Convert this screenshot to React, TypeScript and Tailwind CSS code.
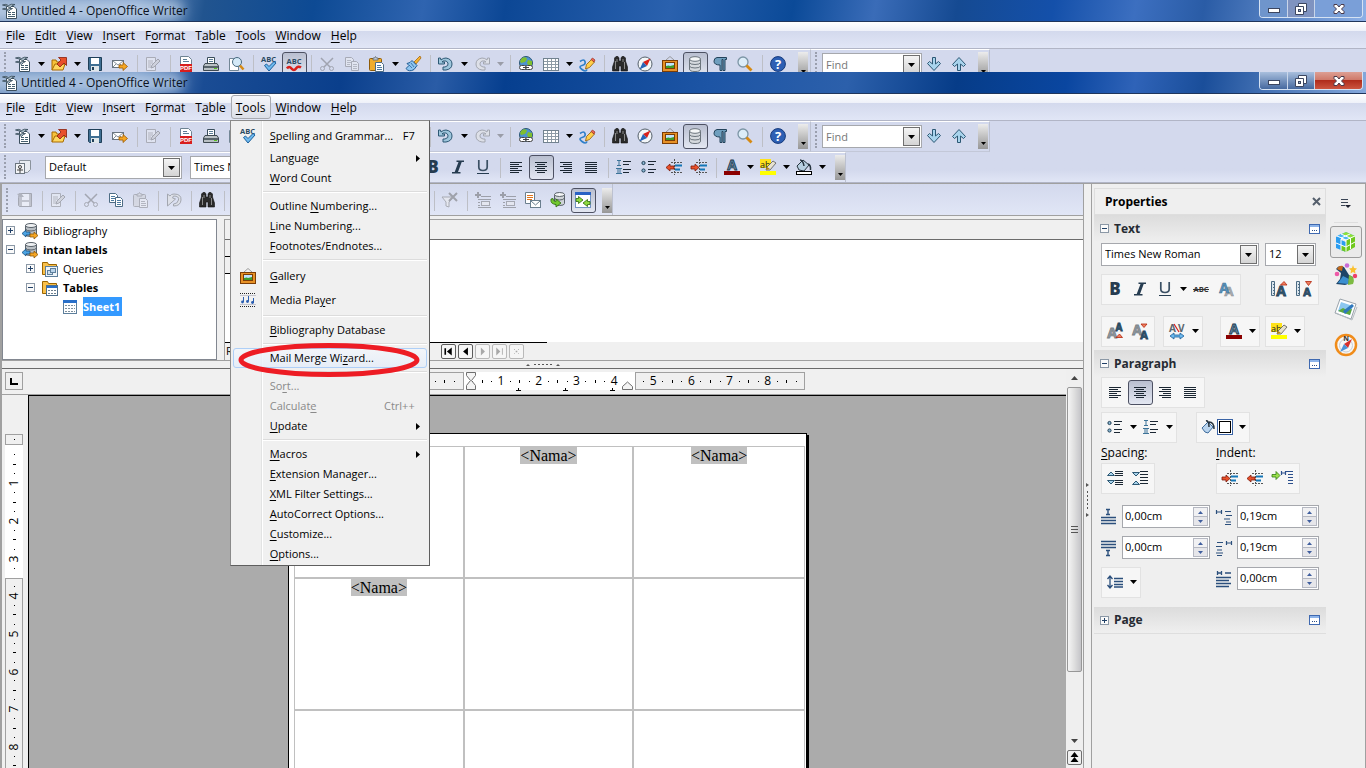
import { useState, type ReactNode } from 'react';
import clsx from 'clsx';

const NAVY = '#2b4a63';

const alignLines = (rows: number[][]) =>
  rows.map(([x, w], i) => <rect key={i} x={x} y={3 + i * 2} width={w} height="1" fill="#1b2733" />);

const icons: Record<string, ReactNode> = {
  doc: (
    <>
      <path d="M4.500 3.500H12l2.500 2.500v9.500h-10z" fill="#fff" stroke="#3b4f5e" />
      <path d="M6 9.500h3M6 11.500h3M6 13.500h7M10 9.500h3M10 11.500h3" stroke="#46606f" />
      <path d="M.5 2Q4 .5 6.500 2.500 9 .5 13 1.500 10 2 8 5 5 2.500.5 2z" fill="#a9bcc8" stroke="#3b4f5e" strokeWidth=".9" />
      <path d="M.5 6Q3 4.500 5 6.500 7.500 5 10.500 5.500 8 6.500 6.500 8.500 4 6 .5 6z" fill="#a9bcc8" stroke="#3b4f5e" strokeWidth=".9" />
    </>
  ),
  open: (
    <>
      <path d="M1 14V4h4l1 2h5v2" fill="#f6c33b" stroke="#a86b00" />
      <path d="M1 14l3-6h10l-2 6z" fill="#ffd75e" stroke="#a86b00" />
      <path d="M6 8l4-4-2.500-2.500h8v8L13 7l-4 4z" fill="#e8502a" stroke="#8a1f0b" strokeWidth=".8" />
    </>
  ),
  save: (
    <>
      <path d="M1.500 1.500h13v13h-12l-1-1z" fill="#3f6f92" stroke="#1f3f58" />
      <rect x="4" y="2" width="8" height="6" fill="#fff" />
      <rect x="4" y="10" width="8" height="5" fill="#dfe6ea" />
      <rect x="5" y="11" width="2" height="3" fill="#1f3f58" />
    </>
  ),
  mail: (
    <>
      <rect x=".5" y="4.500" width="11" height="7" fill="#fff" stroke="#6a7580" />
      <path d="M1 5l5 4 5-4M1 11l3-3M11 11L8 8" fill="none" stroke="#6a7580" strokeWidth=".8" />
      <path d="M7 9h4V6.500l4.500 4-4.500 4V12H7z" fill="#f5a623" stroke="#9c5a00" strokeWidth=".8" />
    </>
  ),
  edit: (
    <g opacity=".45">
      <path d="M1.500 1.500h9v13h-9z" fill="#eef0f4" stroke="#777" />
      <path d="M3 5h5M3 7h5M3 9h3M3 11h3" stroke="#888" />
      <path d="M6 12l1-3 6-6 2 2-6 6z" fill="#c8c8c8" stroke="#666" />
    </g>
  ),
  pdf: (
    <>
      <path d="M2.500 .500h8l3 3v12h-11z" fill="#fff" stroke="#6d8292" />
      <path d="M5 3.500h4M5 5.500h6" stroke="#5b7d96" />
      <rect x="2" y="8" width="12" height="8" fill="#d81e1e" />
      <text x="8" y="14" fontSize="6" fontWeight="700" fill="#fff" textAnchor="middle" fontFamily="Liberation Sans, sans-serif">PDF</text>
    </>
  ),
  print: (
    <>
      <path d="M4.500 8V1.500h7V8" fill="#fff" stroke="#3a4e5c" />
      <path d="M6 3.500h4M6 5.500h4" stroke="#5b7d96" />
      <path d="M2 7.500h12l1.500 2.500v4.500h-15V10z" fill="#b9c0c4" stroke="#3f4a52" />
      <rect x="1" y="10" width="14" height="2" fill="#59646b" />
      <rect x="11" y="12" width="3" height="1" fill="#58c322" />
    </>
  ),
  preview: (
    <>
      <path d="M1.500 2.500h9v12h-9z" fill="#fff" stroke="#738796" />
      <circle cx="9" cy="6" r="4.500" fill="#d4e9f7" stroke="#47697f" />
      <path d="M12 9.500l3.500 4" stroke="#d68a13" strokeWidth="2.500" />
    </>
  ),
  spell: (
    <>
      <text x="7.500" y="6" fontSize="7.500" fontWeight="700" fill={NAVY} textAnchor="middle" fontFamily="Open Sans, sans-serif">ABC</text>
      <path d="M3.500 9.500l2-1.500 2.500 2.500L13 5.500l2 1.500-7 8z" fill="#6db9ee" stroke="#1d5f9a" />
    </>
  ),
  autospell: (
    <>
      <text x="8" y="8" fontSize="7.500" fontWeight="700" fill={NAVY} textAnchor="middle" fontFamily="Open Sans, sans-serif">ABC</text>
      <path d="M1 12.500q2-3 4.500 0t4.500 0 5-1" fill="none" stroke="#d8201c" strokeWidth="2.600" />
    </>
  ),
  cut: (
    <g opacity=".4" stroke="#555" fill="none">
      <path d="M2 2l9 9M14 2L5 11" strokeWidth="1.500" />
      <circle cx="3.500" cy="12.500" r="2" />
      <circle cx="12.500" cy="12.500" r="2" />
    </g>
  ),
  copy: (
    <>
      <path d="M1.500 1.500h6l2 2v7h-8z" fill="#fff" stroke="#4d6c84" />
      <path d="M3 4.500h4M3 6.500h4M3 8.500h3" stroke="#4d7ba0" />
      <path d="M7.500 5.500h5l2 2v7h-7z" fill="#fff" stroke="#4d6c84" />
      <path d="M9 8.500h4M9 10.500h4M9 12.500h4" stroke="#4d7ba0" />
    </>
  ),
  paste: (
    <>
      <rect x=".500" y="2.500" width="12" height="12" rx="1" fill="#f0ad2c" stroke="#8f5b07" />
      <path d="M4 4V2h1.500l1-1.500 1 1.500H9v2z" fill="#c6ccd0" stroke="#5b666e" strokeWidth=".8" />
      <path d="M6.500 6.500h6l2 2v7h-8z" fill="#fff" stroke="#4d6c84" />
      <path d="M8 9.500h4M8 11.500h5M8 13.500h5" stroke="#4d7ba0" />
    </>
  ),
  brush: (
    <>
      <path d="M15 0l-6 6 2 2 5-6z" fill="#f7b531" stroke="#9c5a00" strokeWidth=".7" />
      <path d="M7 4.500l5 5-3 4q-5 3-8-1l3-3-2-2 3-1z" fill="#8fc6f1" stroke="#1f5c93" />
      <path d="M6 7l3 4M4 9l3 3" stroke="#1f5c93" strokeWidth=".7" />
    </>
  ),
  undo: (
    <path d="M.5 2v6h6V6H4l1-1q4-1 5 2t-3 4H5v3h3q6-1 6-6T8 2Q5 2 3 4L2.500 2z" fill="#9ec6dc" stroke="#2c5874" />
  ),
  redo: (
    <path d="M15.500 2v6h-6V6H12l-1-1q-4-1-5 2t3 4h2v3H8q-6-1-6-6t6-6q3 0 5 2l.5-2z" fill="#dde0e8" stroke="#a3a7b0" />
  ),
  link: (
    <>
      <circle cx="8" cy="7" r="6.500" fill="#4d93cf" stroke="#2b5674" />
      <path d="M4 2q4-2 5 1L7 6 3 7 2 5zM10 4l4 1v4l-3 1-2-3z" fill="#7fbf2e" />
      <rect x="1.500" y="9.500" width="7" height="4" rx="2" fill="#fff" stroke="#444" />
      <rect x="7.500" y="9.500" width="7" height="4" rx="2" fill="#fff" stroke="#444" />
      <path d="M5 11.500h6" stroke="#444" />
    </>
  ),
  table: (
    <>
      <rect x=".500" y="2.500" width="15" height="12" fill="#fff" stroke="#71828f" />
      <path d="M1 5.500h14M1 8.500h14M1 11.500h14M4.500 3v11M8.500 3v11M12.500 3v11" stroke="#8d9ba6" />
    </>
  ),
  draw: (
    <>
      <path d="M1 5.500q4-3 5 0t-3 4 0 4 5 0" fill="none" stroke="#2f7fc9" strokeWidth="1.700" />
      <path d="M6.500 13l1-4.500 5-5 3 2.500-5 5.500z" fill="#ffcf4a" stroke="#8f5b07" strokeWidth=".8" />
      <path d="M12 3.500L13.500 2 16 4l-1 2z" fill="#ec6a5a" stroke="#8f1b07" strokeWidth=".6" />
    </>
  ),
  find: (
    <>
      <path d="M2.500 2l1.500-1.500h2L7 2v3h2V2l1-1.500h2L13.500 2v3l2 6v4H9v-5H7v5H.5v-4l2-6z" fill="#2a2a2a" stroke="#111" strokeWidth=".6" />
      <path d="M3.500 5v8M5 3v3M11 3v3M12.500 6v7" stroke="#8a8a8a" />
    </>
  ),
  compass: (
    <>
      <circle cx="8" cy="8" r="7" fill="#f3f6f9" stroke="#55606a" />
      <path d="M13.500 2.500L10 10 6 6z" fill="#d8201c" />
      <path d="M2.500 13.500L6 6l4 4z" fill="#2764b8" />
    </>
  ),
  gallery: (
    <>
      <path d="M4 4l4-3.500L12 4" fill="none" stroke="#888" strokeWidth=".8" />
      <rect x=".500" y="4.500" width="15" height="11" fill="#e79126" stroke="#7c3d05" />
      <rect x="3.500" y="6.500" width="9" height="6" fill="#bfe3ff" stroke="#7c3d05" />
      <path d="M4 12V10q3-1 4 0l4-1v3z" fill="#3f9b2b" />
    </>
  ),
  database: (
    <>
      <path d="M2.500 3v10q0 2.500 5.500 2.500t5.500-2.500V3z" fill="#d6dade" stroke="#6b747c" />
      <ellipse cx="8" cy="3" rx="5.500" ry="2.300" fill="#f4f6f7" stroke="#6b747c" />
      <path d="M2.500 6.500Q3 8.500 8 8.500t5.500-2M2.500 10Q3 12 8 12t5.500-2" fill="none" stroke="#6b747c" />
    </>
  ),
  pilcrow: (
    <path d="M5 1.500h9.500v2H13v11h-2v-11h-1v11H8V9Q2 9 2 5.200 2 2 5 1.500z" fill="#6f9fbe" stroke="#24435a" />
  ),
  zoom: (
    <>
      <circle cx="6" cy="6" r="5" fill="#dcedf8" stroke="#7c95a5" strokeWidth="1.300" />
      <path d="M9.500 9.500l5 5" stroke="#d68a13" strokeWidth="2.800" />
    </>
  ),
  help: (
    <>
      <circle cx="8" cy="8" r="7.400" fill="#2d5fb4" stroke="#163a7c" />
      <text x="8" y="13" fontSize="13" fontWeight="700" fill="#fff" textAnchor="middle" fontFamily="Open Sans, sans-serif">?</text>
    </>
  ),
  down: <path d="M6.500 1.500h3V8l3-2.500 2 2L8 14.500 1.500 7.500l2-2 3 2.500z" fill="#a8d3ec" stroke="#2c5874" />,
  up: <path d="M6.500 14.500h3V8l3 2.500 2-2L8 1.500 1.500 8.500l2 2 3-2.500z" fill="#a8d3ec" stroke="#2c5874" />,
  styles: (
    <>
      <path d="M4.500 1.500h11v9l-3 3h-8z" fill="#e8ebf0" stroke="#8b939c" />
      <rect x=".500" y="4.500" width="9" height="10" fill="#f3f4f6" stroke="#6c7680" />
      <circle cx="5" cy="8" r="1.500" fill="none" stroke="#444" />
      <path d="M5 9v5M2 11h6" stroke="#444" />
    </>
  ),
  bold: <text x="8" y="14" fontSize="17" fontWeight="800" fill="#263c50" textAnchor="middle" fontFamily="Open Sans, sans-serif">B</text>,
  italic: <path d="M6.500 1.500h7.500v1.500h-2.300L8 13h2.500v1.500H2V13h2.700L8.500 3h-2z" fill="#263c50" />,
  underline: (
    <>
      <path d="M3.800 1v7q0 3.500 4.200 3.500T12.200 8V1" fill="none" stroke="#3b5064" strokeWidth="1.700" />
      <rect x="2" y="14" width="12" height="1" fill="#263c50" />
    </>
  ),
  left: alignLines([[2, 12], [2, 9], [2, 12], [2, 8], [2, 12], [2, 9]]),
  center: alignLines([[2, 12], [4, 8], [2, 12], [4, 8], [2, 12], [4, 8]]),
  right: alignLines([[2, 12], [5, 9], [2, 12], [6, 8], [2, 12], [5, 9]]),
  justify: alignLines([[2, 12], [2, 12], [2, 12], [2, 12], [2, 12], [2, 12]]),
  numbering: (
    <>
      <path d="M1 1.500h4M3 2v4M1 6.500h4M0 9.500h6M2 9v5M4 9v5M0 14.500h6" stroke="#3c7398" />
      <path d="M7 2.500h8M7 5.500h6M7 10.500h8M7 13.500h6" stroke="#1b2733" />
    </>
  ),
  bullets: (
    <>
      <circle cx="2.500" cy="4" r="1.600" fill="#8bb8d4" stroke="#1e3d54" />
      <circle cx="2.500" cy="11.500" r="1.600" fill="#8bb8d4" stroke="#1e3d54" />
      <path d="M7 2.500h8M7 5.500h6M7 10.500h8M7 13.500h6" stroke="#1b2733" />
    </>
  ),
  dedent: (
    <>
      <path d="M8.500 0v16M5 3.500h11M5 13.500h11" stroke="#555" strokeDasharray="2 1" />
      <path d="M9 6.500h7M9 10.500h5" stroke="#1477b8" strokeWidth="2" />
      <path d="M0 8.500L4 5v2h4v3H4v2z" fill="#e8502a" stroke="#7d1a0a" strokeWidth=".8" />
    </>
  ),
  indent: (
    <>
      <path d="M8.500 0v16M5 3.500h11M5 13.500h11" stroke="#555" strokeDasharray="2 1" />
      <path d="M9 6.500h7M9 10.500h5" stroke="#1477b8" strokeWidth="2" />
      <path d="M8 8.500L4 5v2H0v3h4v2z" fill="#e8502a" stroke="#7d1a0a" strokeWidth=".8" />
    </>
  ),
  hanging: (
    <>
      <path d="M0 4.500h4V1.500l4 4-4 4V7H0z" fill="#9be04a" stroke="#2f7a12" strokeWidth=".8" />
      <path d="M9.500 1v4M9.500 3h4M13.500 1v4M14 1.500h7M16 4.500h5M16 7.500h5M16 10.500h5M16 13.500h5" stroke="#2b4f8c" strokeWidth="1.200" />
    </>
  ),
  fontcolor: (
    <>
      <text x="8" y="11" fontSize="14" fontWeight="700" fill="#5d88a6" stroke="#20384b" strokeWidth=".8" textAnchor="middle" fontFamily="Open Sans, sans-serif">A</text>
      <rect x="0" y="12" width="16" height="4" fill="#8b0000" />
    </>
  ),
  highlight: (
    <>
      <rect x="0" y="0" width="11" height="9" fill="#ffe21a" />
      <text x="0" y="9" fontSize="9" fill="#222" fontFamily="Open Sans, sans-serif">ab</text>
      <path d="M6 11l1-3 6-6 3 2-6 7z" fill="#e6e1cf" stroke="#555" strokeWidth=".8" />
      <path d="M6 11l1-3 3 2z" fill="#b8860b" />
      <rect x="0" y="12" width="16" height="4" fill="#ffff00" />
    </>
  ),
  fill: (
    <>
      <path d="M1 7l6-6 6 5-5 6-5-1z" fill="#b7cfe0" stroke="#26333d" />
      <path d="M4 1q3 0 4 6M12 5q3 1 2.500 6" fill="none" stroke="#26333d" strokeWidth="1.500" />
      <rect x=".500" y="12.500" width="15" height="3" fill="#fff" stroke="#000" />
    </>
  ),
  savegray: (
    <g opacity=".4">
      <path d="M2.500 1.500h12v13h-12l-1-1v-8z" fill="#999" stroke="#555" />
      <rect x="5" y="2" width="7" height="6" fill="#fff" />
      <rect x="5" y="10" width="7" height="4" fill="#fff" />
      <path d="M0 2l4-1 3 4H3z" fill="#777" />
    </g>
  ),
  pastegray: (
    <g opacity=".4">
      <rect x=".500" y="2.500" width="12" height="12" rx="1" fill="#ccc" stroke="#666" />
      <path d="M4 4V2h1.500l1-1.500 1 1.500H9v2z" fill="#ddd" stroke="#666" />
      <path d="M6.500 6.500h6l2 2v7h-8z" fill="#f5f5f5" stroke="#666" />
      <path d="M8 9.500h4M8 11.500h5M8 13.500h5" stroke="#777" />
    </g>
  ),
  copygray: (
    <g opacity=".4">
      <path d="M1.500 1.500h6l2 2v7h-8z" fill="#f5f5f5" stroke="#666" />
      <path d="M3 4.500h4M3 6.500h4M3 8.500h3" stroke="#888" />
      <path d="M7.500 5.500h5l2 2v7h-7z" fill="#f5f5f5" stroke="#666" />
      <path d="M9 8.500h4M9 10.500h4M9 12.500h4" stroke="#888" />
    </g>
  ),
  undogray: (
    <path d="M1.500 2v12l8-7-3-1 1-2q6 0 5 4t-5 4v2q7 0 7.500-6T8 2Q5 2 4 4z" fill="#dde0e8" stroke="#a3a7b0" />
  ),
  filter: (
    <g opacity=".5">
      <path d="M0 5h11l-4 5v5l-3-1v-4z" fill="#eee" stroke="#777" />
      <path d="M7 1l8 8M15 1L7 9" stroke="#666" strokeWidth="2" />
    </g>
  ),
  datatext: (
    <g opacity=".45">
      <path d="M3 0v6M0 3h6" stroke="#555" strokeWidth="2" />
      <path d="M6 4.500h10M3 7.500h13M3 10.500h2M3 13.500h2M3 15.500h13" stroke="#555" />
      <rect x="6.500" y="9.500" width="8" height="4" fill="#eee" stroke="#666" />
    </g>
  ),
  merge: (
    <>
      <path d="M.500 .500h9v11h-9z" fill="#fff" stroke="#6b7f8e" />
      <path d="M2 3.500h6M2 5.500h6M2 7.500h5" stroke="#e0731c" strokeWidth="1.200" />
      <rect x="5.500" y="8.500" width="10" height="7" fill="#fff" stroke="#6b7f8e" />
      <path d="M6 9l4.500 4L15 9" fill="none" stroke="#6b7f8e" />
    </>
  ),
  dbcurrent: (
    <>
      <path d="M4.500 2.500v9q0 2 5 2t5-2v-9z" fill="#cfd4d8" stroke="#59626a" />
      <ellipse cx="9.500" cy="2.500" rx="5" ry="2" fill="#f4f6f7" stroke="#59626a" />
      <path d="M4.500 6q1 2 5 2t5-2" fill="none" stroke="#59626a" />
      <path d="M1 7q-1 5 5 5.500V15l5-4-5-4v2.500q-3 0-3-3z" fill="#72c92f" stroke="#2c6b0d" strokeWidth=".8" />
    </>
  ),
  explorer: (
    <>
      <rect x=".500" y=".500" width="15" height="15" fill="#fff" stroke="#7393c4" />
      <rect x="0" y="0" width="16" height="3" fill="#2a62c4" />
      <path d="M1 6.500h2.500v-2l4.500 3.500-4.500 3.500v-2H1zM15 9.500h-2.500v-2L8 11l4.500 3.500v-2H15z" fill="#8fd93e" stroke="#2c6b0d" strokeWidth=".8" />
    </>
  ),
  media: (
    <>
      <path d="M0 1.500h16M0 14.500h16" stroke="#222" strokeDasharray="1 1" />
      <path d="M0 3.500h16M0 12.500h16" stroke="#99a" strokeWidth=".5" />
      <path d="M3.500 5v5M8.500 4v5M13.500 6v5" stroke="#2a5db0" />
      <circle cx="2.500" cy="10" r="1.400" fill="#2a5db0" />
      <circle cx="7.500" cy="9.500" r="1.400" fill="#2a5db0" />
      <circle cx="12.500" cy="10.500" r="1.400" fill="#2a5db0" />
    </>
  ),
  dbsource: (
    <>
      <path d="M3.500 2.500v9q0 2 5.500 2t5.500-2v-9z" fill="#b9bfc4" stroke="#59626a" />
      <ellipse cx="9" cy="2.500" rx="5.500" ry="2" fill="#eef0f2" stroke="#59626a" />
      <path d="M3.500 6q1 2 5.500 2t5.500-2" fill="none" stroke="#59626a" />
      <path d="M0 10.500L4 7v2h4v3H4v2z" fill="#4ba3e3" stroke="#184f7d" strokeWidth=".8" />
      <path d="M16 12.500L12 9v2H8v3h4v2z" fill="#f5a623" stroke="#8f5b07" strokeWidth=".8" />
    </>
  ),
  queries: (
    <>
      <path d="M.5 13.500V1.500h5l1 2h8V13.500z" fill="#f9c04a" stroke="#9c6500" />
      <rect x="3.500" y="5.500" width="12" height="10" fill="#eef4f9" stroke="#5d7f9c" />
      <rect x="5.500" y="9.500" width="5" height="4" fill="#cfe0ee" stroke="#5d7f9c" />
      <rect x="8.500" y="7.500" width="5" height="4" fill="#b9d3ea" stroke="#5d7f9c" />
    </>
  ),
  tables: (
    <>
      <path d="M.5 13.500V1.500h5l1 2h8V13.500z" fill="#f9c04a" stroke="#9c6500" />
      <rect x="4.500" y="5.500" width="11" height="10" fill="#fff" stroke="#4e6f8c" />
      <rect x="5" y="6" width="10" height="2" fill="#2a70c9" />
      <path d="M6 10.500h2M9 10.500h2M12 10.500h2M6 13.500h2M9 13.500h2M12 13.500h2" stroke="#6b7f8e" />
    </>
  ),
  sheet: (
    <>
      <rect x="1.500" y="1.500" width="13" height="13" fill="#fff" stroke="#5d7f9c" />
      <rect x="1" y="1" width="14" height="3" fill="#2a70c9" />
      <path d="M3 6.500h2M6 6.500h2M9 6.500h2M12 6.500h1M3 9.500h2M6 9.500h2M9 9.500h2M12 9.500h1M3 12.500h2M6 12.500h2M9 12.500h2M12 12.500h1" stroke="#7d8f9c" />
    </>
  ),
  strike: (
    <>
      <text x="8" y="11" fontSize="7.500" fontWeight="700" fill="#333" textAnchor="middle" fontFamily="Open Sans, sans-serif">ABC</text>
      <path d="M0 8.500h16" stroke="#333" />
    </>
  ),
  shadow: (
    <>
      <text x="11" y="15" fontSize="13" fontWeight="700" fill="#a9adb1" stroke="#8f9498" strokeWidth=".6" textAnchor="middle" fontFamily="Open Sans, sans-serif">A</text>
      <text x="6" y="12" fontSize="14" fontWeight="700" fill="#5a94bd" stroke="#3f6f92" strokeWidth=".6" textAnchor="middle" fontFamily="Open Sans, sans-serif">A</text>
    </>
  ),
  grow: (
    <>
      <path d="M.5 .500h3v14h-3zM2 3.500h2M2 6.500h2M2 9.500h2M2 12.500h2" fill="#dbe6ee" stroke="#4d6c84" />
      <text x="10" y="15" fontSize="14" fontWeight="700" fill="#35566e" stroke="#24435a" strokeWidth=".8" textAnchor="middle" fontFamily="Open Sans, sans-serif">A</text>
      <path d="M9.500 4L13 .500 16 4z" fill="#f08060" stroke="#b3260d" strokeWidth=".8" />
    </>
  ),
  shrink: (
    <>
      <path d="M.5 .500h3v14h-3zM2 3.500h2M2 6.500h2M2 9.500h2M2 12.500h2" fill="#dbe6ee" stroke="#4d6c84" />
      <text x="11" y="15" fontSize="11" fontWeight="700" fill="#35566e" stroke="#24435a" strokeWidth=".8" textAnchor="middle" fontFamily="Open Sans, sans-serif">A</text>
      <path d="M9.500 .500h6L12.500 4.500z" fill="#f08060" stroke="#b3260d" strokeWidth=".8" />
    </>
  ),
  superscript: (
    <>
      <text x="5" y="15" fontSize="14" fontWeight="700" fill="#8f979d" stroke="#7a8288" strokeWidth=".8" textAnchor="middle" fontFamily="Open Sans, sans-serif">A</text>
      <text x="12" y="8" fontSize="10" fontWeight="700" fill="#2f566f" stroke="#24435a" strokeWidth=".8" textAnchor="middle" fontFamily="Open Sans, sans-serif">A</text>
      <path d="M9 14.500L12.500 11l3 3.500z" fill="#f08060" stroke="#b3260d" strokeWidth=".8" />
    </>
  ),
  subscript: (
    <>
      <text x="5" y="12" fontSize="14" fontWeight="700" fill="#8f979d" stroke="#7a8288" strokeWidth=".8" textAnchor="middle" fontFamily="Open Sans, sans-serif">A</text>
      <text x="12" y="16" fontSize="11" fontWeight="700" fill="#2f566f" stroke="#24435a" strokeWidth=".8" textAnchor="middle" fontFamily="Open Sans, sans-serif">A</text>
      <path d="M9 1h6L12 4.500z" fill="#f08060" stroke="#b3260d" strokeWidth=".8" />
    </>
  ),
  spacing: (
    <>
      <text x="0" y="9" fontSize="10" fontWeight="700" fill="#5b666e" fontFamily="Open Sans, sans-serif">A</text>
      <text x="9" y="9" fontSize="10" fontWeight="700" fill="#5b666e" fontFamily="Open Sans, sans-serif">V</text>
      <path d="M5 1l5 8" stroke="#d8201c" strokeWidth="1.300" />
      <path d="M1 13l4-3v2h6v-2l4 3-4 3v-2H5v2z" fill="#6db9ee" stroke="#1d5f9a" strokeWidth=".8" />
    </>
  ),
  bucket: (
    <>
      <path d="M1 9l6-6 5 5-5 6-3-1z" fill="#b9d4ee" stroke="#3f6c9c" />
      <path d="M5 2q3-1 3 6M8 3q5 0 5 7" fill="none" stroke="#26333d" strokeWidth="1.500" />
    </>
  ),
  spaceinc: (
    <>
      <path d="M.5 5.500L4 2l3.500 3.500zM.500 10.500h7L4 14z" fill="#a8d3ec" stroke="#2c5874" />
      <path d="M8 1.500h8M8 3.500h8M8 5.500h8M8 10.500h8M8 12.500h8M8 14.500h8" stroke="#1b2733" />
    </>
  ),
  spacedec: (
    <>
      <path d="M.5 2.500h7L4 6zM.500 14.500L4 11l3.500 3.500z" fill="#a8d3ec" stroke="#2c5874" />
      <path d="M8 1.500h8M8 4.500h8M8 7.500h8M8 10.500h8M8 13.500h8" stroke="#1b2733" />
    </>
  ),
  above: <path d="M5 .5h4M7 .5v5M5 5.500h4M0 8.500h15M0 11.500h15M0 14.500h15" fill="none" stroke="#2b4f7c" strokeWidth="1.400" />,
  below: <path d="M0 1.500h15M0 4.500h15M0 7.500h15M5 10.500h4M7 10.500v5M5 15.500h4" fill="none" stroke="#2b4f7c" strokeWidth="1.400" />,
  before: <path d="M.5 1v4M.5 3h5M5.500 1v4M9 2.500h6M10 6.500h6M8 10h6M10 13h5M9 15.500h6" fill="none" stroke="#2b4f7c" strokeWidth="1.200" />,
  after: <path d="M10.500 1v4M10.500 3h5M15.500 1v4M1 2.500h6M0 6.500h6M1 10h5M0 13h7M1 15.500h5" fill="none" stroke="#2b4f7c" strokeWidth="1.200" />,
  firstline: <path d="M1.500 0v4M1.500 2h4M5.500 0v4M9 2h6M0 6.500h15M0 9.500h13M0 12.500h15M0 15.500h13" fill="none" stroke="#2b4f7c" strokeWidth="1.300" />,
  linespacing: <path d="M3 2v12M.5 5L3 2l2.500 3M.500 11L3 14l2.500-3M7 4.500h9M7 7.500h9M7 10.500h9M7 13h9" fill="none" stroke="#2b4f7c" strokeWidth="1.300" />,
};

type IconProps = { name: string; className?: string };

function Icon({ name, className = 'h-4 w-4' }: IconProps) {
  return (
    <svg viewBox="0 0 16 16" className={clsx('shrink-0 overflow-visible', className)} fill="none" aria-hidden="true">
      {icons[name]}
    </svg>
  );
}

// "&" marks the letter that is underlined as keyboard mnemonic
function Mnemonic({ text }: { text: string }) {
  const i = text.indexOf('&');
  if (i < 0) return <>{text}</>;
  return (
    <>
      {text.slice(0, i)}
      <span className="underline underline-offset-2">{text[i + 1]}</span>
      {text.slice(i + 2)}
    </>
  );
}

function Caret({ className = 'text-black' }: { className?: string }) {
  return (
    <svg viewBox="0 0 7 4" className={clsx('h-[4px] w-[7px] shrink-0', className)} aria-hidden="true">
      <path d="M0 0h7L3.500 4z" fill="currentColor" />
    </svg>
  );
}

function ToolButton({ name, pressed, label }: { name: string; pressed?: boolean; label?: string }) {
  return (
    <button
      aria-label={label ?? name}
      className={clsx(
        'flex h-[25px] w-[25px] shrink-0 items-start rounded-[3px] border p-[3px]',
        pressed ? 'border-[#4d5163] bg-gradient-to-b from-[#b9bfd0] to-[#e3e7f2]' : 'border-transparent'
      )}
    >
      <Icon name={name} />
    </button>
  );
}

function ArrowButton({ dim }: { dim?: boolean }) {
  return (
    <button aria-label="More" className="flex h-[25px] w-[11px] shrink-0 items-start justify-center pt-[10px]">
      <Caret className={dim ? 'text-[#9a9da8]' : 'text-black'} />
    </button>
  );
}

function Divider() {
  return (
    <div className="flex h-[25px] w-2 shrink-0 items-center justify-center">
      <div className="h-5 w-px bg-[#bdbfc6]" />
    </div>
  );
}

function Handle() {
  return (
    <div className="flex w-[11px] shrink-0 pl-1">
      <div className="h-6 border-l-2 border-dotted border-[#9a9fae]" />
    </div>
  );
}

function Overflow() {
  return (
    <button aria-label="Toolbar options" className="flex h-[25px] w-[10px] shrink-0 items-end justify-center bg-gradient-to-b from-[#ececec] to-[#979797] pb-1">
      <svg viewBox="0 0 5 3" className="h-[3px] w-[5px]"><path d="M0 0h5L2.500 3z" /></svg>
    </button>
  );
}

// "|" draws a separator, "v" a split arrow, "-v" a disabled one, "!" a pressed button
function ToolItems({ items }: { items: string[] }) {
  return (
    <>
      {items.map((item, i) => {
        if (item === '|') return <Divider key={i} />;
        if (item === 'v') return <ArrowButton key={i} />;
        if (item === '-v') return <ArrowButton key={i} dim />;
        if (item[0] === '!') return <ToolButton key={i} name={item.slice(1)} pressed />;
        return <ToolButton key={i} name={item} />;
      })}
    </>
  );
}

const standardItems = [
  'doc', 'v', 'open', 'v', 'save', 'mail', '|', 'edit', '|', 'pdf', 'print', 'preview', '|',
  'spell', '!autospell', '|', 'cut', 'copygray', 'paste', 'v', 'brush', '|', 'undo', 'v', 'redo', '-v', '|',
  'link', 'table', 'v', 'draw', '|', 'find', 'compass', 'gallery', '!database', 'pilcrow', 'zoom', '|', 'help',
];

const formatItems = [
  'bold', 'italic', 'underline', '|', 'left', '!center', 'right', 'justify', '|',
  'numbering', 'bullets', 'dedent', 'indent', '|', 'fontcolor', 'v', 'highlight', 'v', 'fill', 'v',
];

const dataItems = [
  'savegray', '|', 'edit', '|', 'cut', 'copy', 'pastegray', '|', 'undogray', '|', 'find', '|',
  'dbcurrent', '|', 'numbering', 'numbering', 'numbering', '|', 'filter', 'filter', 'filter', 'v', '|',
  'filter', '|', 'datatext', 'datatext', 'merge', 'dbcurrent', '!explorer',
];

function Select({ value, label, className }: { value: string; label: string; className: string }) {
  return (
    <div className={clsx('relative h-[23px] shrink-0 border border-[#a6a8ad] bg-white', className)}>
      <select aria-label={label} className="h-full w-full appearance-none bg-transparent pl-[3px] text-[11px] outline-none">
        <option>{value}</option>
      </select>
      <ComboArrow />
    </div>
  );
}

function ComboArrow() {
  return (
    <span className="pointer-events-none absolute top-px right-px bottom-px flex w-[17px] items-center justify-center border border-[#6f6f6f] bg-gradient-to-b from-[#f4f4f4] to-[#d4d4d4]">
      <Caret />
    </span>
  );
}

function TitleBar({ active }: { active?: boolean }) {
  return (
    <header
      className={clsx(
        'relative flex h-[22px] items-start overflow-hidden border-b border-[#20365c] pt-px',
        active
          ? 'bg-[linear-gradient(100deg,#5f86b8_0%,#6c92c4_10%,#1a4c94_15%,#0a3f8c_25%,#2a5ca6_32%,#063f8f_37%,#1d55a5_52%,#2c60ab_62%,#063c88_70%,#0a46a0_78%,#2f63b8_83%,#1a4e9a_88%,#86a9dc_100%)]'
          : 'bg-[linear-gradient(100deg,#7796bf_0%,#7b9cc9_10%,#21548f_15%,#0d4a94_23%,#2f64b0_31%,#0c4795_37%,#2a61ae_49%,#0b4a98_58%,#3a6cb8_64%,#154a92_70%,#1450aa_77%,#3c6fc0_83%,#2a5ca6_88%,#8db0e6_100%)]'
      )}
    >
      <div className="absolute -left-4 top-0 h-5 w-[200px] rounded-full bg-[#dbe8f7]/60 blur-[6px]" />
      <div className="relative flex items-center gap-[3px] pl-[2px]">
        <Icon name="doc" />
        <h1 className="text-[12px] leading-[20px] text-[#0a1220]">Untitled 4 - OpenOffice Writer</h1>
      </div>
      <div className="absolute top-0 right-[3px] flex h-[18px] overflow-hidden rounded-b border border-t-0 border-[#d5e2f3]">
        <button aria-label="Minimize" className={clsx('flex w-[28px] items-center justify-center border-r border-[#c9d6ea]', active ? 'bg-gradient-to-b from-[#a9bfdd] to-[#46699f]' : 'bg-[#6f95cc]')}>
          <svg viewBox="0 0 12 5" className="mt-1 h-[5px] w-3"><rect x=".500" y=".500" width="11" height="4" fill="#fff" stroke="#3c4660" /></svg>
        </button>
        <button aria-label="Restore" className={clsx('flex w-[27px] items-center justify-center border-r border-[#c9d6ea]', active ? 'bg-gradient-to-b from-[#a9bfdd] to-[#46699f]' : 'bg-[#7f93c0]')}>
          <svg viewBox="0 0 12 12" className="h-3 w-3">
            <path d="M3.500 .500h8v8h-8z" fill="#fff" stroke="#3c4660" />
            <path d="M.500 3.500h8v8h-8z" fill="#fff" stroke="#3c4660" />
            <rect x="3.500" y="6.500" width="2" height="2" fill="#9db4d6" stroke="#3c4660" />
          </svg>
        </button>
        <button aria-label="Close" className={clsx('flex w-[47px] items-center justify-center', active ? 'bg-[linear-gradient(#dd9f94_0%,#cf7a6b_45%,#b02c1c_50%,#cc5540_100%)]' : 'bg-[#7a9fd8]')}>
          <svg viewBox="0 0 12 10" className="h-[10px] w-3">
            <path d="M1 .5h3L6 3 8 .500h3v2L8.500 5 11 7.500v2H8L6 7 4 9.500H1v-2L3.500 5 1 2.500z" fill="#fff" stroke="#4a3a4a" />
          </svg>
        </button>
      </div>
    </header>
  );
}

const menus = ['&File', '&Edit', '&View', '&Insert', 'F&ormat', 'T&able', '&Tools', '&Window', '&Help'];

type Entry = { label: string; icon?: string; keys?: string; sub?: boolean; off?: boolean; hot?: boolean } | null;

const toolsMenu: Entry[] = [
  { label: '&Spelling and Grammar...', icon: 'spell', keys: 'F7' },
  { label: 'Language', sub: true },
  { label: '&Word Count' },
  null,
  { label: 'Outline &Numbering...' },
  { label: '&Line Numbering...' },
  { label: '&Footnotes/Endnotes...' },
  null,
  { label: '&Gallery', icon: 'gallery' },
  { label: 'Media Pla&yer', icon: 'media' },
  null,
  { label: '&Bibliography Database' },
  null,
  { label: 'Mail Merge Wi&zard...', hot: true },
  null,
  { label: 'So&rt...', off: true },
  { label: 'Calculat&e', keys: 'Ctrl++', off: true },
  { label: '&Update', sub: true },
  null,
  { label: '&Macros', sub: true },
  { label: '&Extension Manager...' },
  { label: '&XML Filter Settings...' },
  { label: '&AutoCorrect Options...' },
  { label: '&Customize...' },
  { label: '&Options...' },
];

function ToolsMenu() {
  return (
    <div className="absolute top-full left-[-1px] z-50 w-[200px] border border-[#8a8a8a] border-r-[#5e5e5e] border-b-[#5e5e5e] bg-[#f0f0f0] pt-[3px] pb-px">
      <div className="absolute top-0 bottom-0 left-[30px] w-[2px] border-l border-[#e2e3e3] bg-white" />
      {toolsMenu.map((entry, i) =>
        entry === null ? (
          <div key={i} className="flex h-2 items-center pr-[2px] pl-[32px]">
            <div className="h-[2px] w-full border-t border-[#dcdcdc] bg-white" />
          </div>
        ) : (
          <button
            key={i}
            disabled={entry.off}
            className={clsx(
              'relative flex w-full items-center pr-[14px] pl-[39px] text-left',
              entry.icon ? 'h-6' : 'h-5',
              entry.off && 'text-[#8a8a8a]'
            )}
          >
            {entry.hot && (
              <span className="absolute inset-x-[2px] inset-y-0 rounded-[3px] border border-[#aecff7] bg-gradient-to-b from-[#f3f6fb]/80 to-[#e4edf9]/80" />
            )}
            {entry.icon && (
              <span className="absolute left-[9px]">
                <Icon name={entry.icon} />
              </span>
            )}
            <span className="relative flex-1 whitespace-nowrap"><Mnemonic text={entry.label} /></span>
            {entry.keys && <span>{entry.keys}</span>}
            {entry.sub && (
              <svg viewBox="0 0 4 7" className="absolute right-[9px] h-[7px] w-1"><path d="M0 0l4 3.500L0 7z" /></svg>
            )}
            {entry.hot && (
              <svg viewBox="0 0 184 36" className="absolute top-[-6px] left-[6px] h-9 w-[184px]">
                <ellipse cx="92" cy="18" rx="88" ry="14.500" fill="none" stroke="#ed1c24" strokeWidth="5" />
              </svg>
            )}
          </button>
        )
      )}
    </div>
  );
}

function MenuBar({ open, onToggle }: { open: boolean; onToggle?: () => void }) {
  return (
    <nav className="flex h-[27px] items-end border-b border-[#b1b5c6] bg-[linear-gradient(#ffffff_0px,#eef1f9_9px,#d3d9ed_9px,#e1e6f6_100%)] pl-px">
      {menus.map(menu => {
        const isTools = menu === '&Tools';
        return (
          <div key={menu} className={clsx('flex h-[25px]', isTools && 'relative')}>
            <button
              onClick={isTools ? onToggle : undefined}
              className={clsx(
                'mb-px rounded-[3px] border px-[4px] pt-px text-[12px]',
                isTools && open ? 'border-[#a7a9b0] bg-gradient-to-b from-[#f5f6fa] to-[#dcdfe8]' : 'border-transparent'
              )}
            >
              <Mnemonic text={menu} />
            </button>
            {isTools && open && <ToolsMenu />}
          </div>
        );
      })}
    </nav>
  );
}

function StandardToolbar() {
  return (
    <div className="flex h-[31px] bg-[#d3d9ed]">
      <div className="flex items-start border-t border-r border-b border-t-white border-r-[#bcc1d0] border-b-[#c3c8d8] pt-[2px] pr-[2px]">
        <Handle />
        <ToolItems items={standardItems} />
        <div className="w-[7px]" />
        <Overflow />
      </div>
      <div className="flex items-start border-t border-r border-b border-t-white border-r-[#bcc1d0] border-b-[#c3c8d8] pt-[2px] pr-px">
        <Handle />
        <div className="relative mt-px h-[23px] w-[100px] border border-[#a6a8ad] bg-white">
          <input aria-label="Find" placeholder="Find" className="h-full w-full pl-[3px] text-[11px] outline-none placeholder:text-[#777]" />
          <ComboArrow />
        </div>
        <ToolButton name="down" />
        <ToolButton name="up" />
        <div className="w-[6px]" />
        <Overflow />
      </div>
    </div>
  );
}

function FormatToolbar() {
  return (
    <div className="flex h-[31px] border-b border-[#b1b5c6] bg-gradient-to-b from-[#d3d9ed] from-60% to-[#e1e6f6]">
      <div className="flex items-start border-t border-r border-t-white border-r-[#bcc1d0] pt-[2px]">
        <Handle />
        <ToolButton name="styles" />
        <Select value="Default" label="Apply style" className="mt-px ml-[9px] w-[137px]" />
        <Select value="Times New Roman" label="Font name" className="mt-px ml-2 w-[155px]" />
        <Select value="12" label="Font size" className="mx-2 mt-px w-[60px]" />
        <ToolItems items={formatItems} />
        <div className="w-[7px]" />
        <Overflow />
      </div>
    </div>
  );
}

function Expander({ open }: { open?: boolean }) {
  return (
    <svg viewBox="0 0 9 9" className="h-[9px] w-[9px] shrink-0" aria-hidden="true">
      <rect x=".500" y=".500" width="8" height="8" fill="#fafafa" stroke="#8b98a6" />
      <path d={open ? 'M2 4.500h5' : 'M2 4.500h5M4.500 2v5'} stroke="#1f3f66" />
    </svg>
  );
}

function SourceTree() {
  return (
    <ul className="w-[215px] shrink-0 border border-[#828790] bg-white pt-px leading-[19px]">
      <li className="flex h-[19px] items-center pl-[3px]">
        <Expander /><Icon name="dbsource" className="mr-[5px] ml-[7px] h-4 w-4" />Bibliography
      </li>
      <li className="flex h-[19px] items-center pl-[3px] font-bold">
        <Expander open /><Icon name="dbsource" className="mr-[5px] ml-[7px] h-4 w-4" />intan labels
      </li>
      <li className="flex h-[19px] items-center pl-[23px]">
        <Expander /><Icon name="queries" className="mr-[5px] ml-[7px] h-4 w-4" />Queries
      </li>
      <li className="flex h-[19px] items-center pl-[23px] font-bold">
        <Expander open /><Icon name="tables" className="mr-[5px] ml-[7px] h-4 w-4" />Tables
      </li>
      <li className="flex h-[19px] items-center pl-[59px] font-bold">
        <Icon name="sheet" className="mr-[5px] h-4 w-4" />
        <span className="bg-[#3399ff] pr-[2px] text-white">Sheet1</span>
      </li>
    </ul>
  );
}

const recordButtons = [
  { label: 'First record', d: 'M3 4h2v8H3zM12 3v10L6 8z', on: true },
  { label: 'Previous record', d: 'M11 3v10L5 8z', on: true },
  { label: 'Next record', d: 'M6 3v10l5-5z', on: false },
  { label: 'Last record', d: 'M4 3v10l5-5zM11 4h1v8h-1z', on: false },
  { label: 'New record', d: 'M5 5h1v1H5zM10 5h1v1h-1zM7 7h2v2H7zM5 10h1v1H5zM10 10h1v1h-1z', on: false },
];

function DataGrid() {
  return (
    <div className="ml-[7px] flex min-w-0 flex-1 flex-col border-t border-l border-[#a0a0a0] bg-white">
      <table className="w-full border-collapse">
        <thead>
          <tr className="h-[19px] border-b border-[#6b6b6b] bg-[#f0f0f0]"><th className="w-4" /><th /></tr>
        </thead>
        <tbody>
          <tr className="h-[17px]"><td className="border-b border-black bg-[#f0f0f0]" /><td /></tr>
          <tr className="h-[17px]"><td className="border-b border-black bg-[#f0f0f0]" /><td /></tr>
        </tbody>
      </table>
      <div className="flex-1" />
      <div className="flex h-[18px] items-center bg-[#f0f0f0]">
        <div className="flex h-full w-[322px] items-center gap-[2px] border-t border-black pl-px">
          <label htmlFor="record" className="w-[45px]">Record</label>
          <input id="record" className="mr-[96px] h-4 w-[70px] border border-[#a0a0a0] bg-white px-1" />
          {recordButtons.map(b => (
            <button key={b.label} aria-label={b.label} className={clsx('h-[15px] w-[15px] rounded-[2px] border bg-[#f6f6f6]', b.on ? 'border-[#5c5c5c]' : 'border-[#b9b9b9]')}>
              <svg viewBox="0 0 16 16" className="h-full w-full" fill={b.on ? '#000' : '#a8a8a8'}><path d={b.d} /></svg>
            </button>
          ))}
        </div>
      </div>
    </div>
  );
}

// "." is a small dot, "'" a half-unit tick, anything else is drawn as a number
function Marks({ marks, vertical }: { marks: string[]; vertical?: boolean }) {
  return (
    <>
      {marks.map((m, i) => (
        <span key={i} className="flex min-h-0 min-w-0 flex-1 items-center justify-center">
          {m === '.' && <span className="h-px w-px bg-black" />}
          {m === "'" && <span className={clsx('bg-black', vertical ? 'h-px w-[3px]' : 'h-[3px] w-px')} />}
          {m !== '.' && m !== "'" && <span className={clsx('text-[12px] leading-none', vertical && '-rotate-90')}>{m}</span>}
        </span>
      ))}
    </>
  );
}

const unit = (n: string) => ['.', "'", '.', n];
const tail = ['.', "'", '.'];

function HorizontalRuler() {
  return (
    <div className="flex h-[26px] items-start border-b border-[#a0a0a0] pt-[3px] pl-[3px]">
      <button aria-label="Tab stop" className="flex h-[18px] w-[18px] items-center justify-center border border-[#a0a0a0]">
        <svg viewBox="0 0 8 7" className="h-[7px] w-2"><path d="M0 0h2v5h6v2H0z" /></svg>
      </button>
      <div className="ml-[266px] flex h-[18px]">
        <div className="flex w-[175px] justify-end border border-[#a0a0a0] pr-[4px]">
          <div className="flex w-[28px]"><Marks marks={tail} /></div>
        </div>
        <div className="relative flex w-[171px] bg-white pl-[4px]">
          <div className="flex w-[151px]"><Marks marks={[...unit('1'), ...unit('2'), ...unit('3'), ...unit('4')]} /></div>
          <svg viewBox="0 0 171 20" className="absolute top-0 left-0 h-5 w-[171px]" fill="none">
            <path d="M2.500 .500h9v3l-4 5 4 5v4h-9v-4l4-5-4-5z" fill="#f4f4f4" stroke="#6f6f6f" />
            <path d="M158.500 17.500v-3l5-4.500 5 4.500v3z" fill="#f4f4f4" stroke="#6f6f6f" />
            <path d="M52 18.500h5M54.500 16v2M99 18.500h5M101.500 16v2M146 18.500h5M148.500 16v2" stroke="#000" />
          </svg>
        </div>
        <div className="flex w-[170px] border border-[#a0a0a0] px-[3px]">
          <Marks marks={['.', '5', ...unit('6'), ...unit('7'), ...unit('8'), ...tail]} />
        </div>
      </div>
    </div>
  );
}

function VerticalRuler() {
  return (
    <div className="flex w-[26px] shrink-0 flex-col overflow-hidden pr-[5px] pl-[3px]">
      <div className="mt-[39px] flex h-[11px] shrink-0 flex-col border border-[#a0a0a0]"><Marks vertical marks={['.']} /></div>
      <div className="flex h-[133px] shrink-0 flex-col bg-white py-[5px]">
        <Marks vertical marks={[...unit('1'), ...unit('2'), ...unit('3'), '.']} />
      </div>
      <div className="min-h-0 flex-1 overflow-hidden border-x border-t border-[#a0a0a0] pt-[3px]">
        <div className="flex h-[198px] flex-col">
          <Marks vertical marks={['.', '4', ...unit('5'), ...unit('6'), ...unit('7'), ...unit('8'), ...tail]} />
        </div>
      </div>
    </div>
  );
}

const labels = [
  ['', '<Nama>', '<Nama>'],
  ['<Nama>', '', ''],
  ['', '', ''],
];

function DocumentPage() {
  return (
    <div className="min-w-0 flex-1 overflow-hidden border-t border-l border-black bg-[#ababab] pl-[259px] pt-[37px]">
      <div className="h-[1000px] w-[519px] border border-black bg-white pt-3 pr-px pl-[5px] shadow-[2px_2px_0_#000]">
        <table className="w-full table-fixed border-separate border-spacing-0 border border-[#c0c0c0] font-['Liberation_Serif',serif] text-[16px] leading-[17px]">
          <tbody>
            {labels.map((row, r) => (
              <tr key={r} className="h-[132px]">
                {row.map((cell, c) => (
                  <td key={c} className={clsx('border-b-2 border-[#c0c0c0] p-0 text-center align-top', c < 2 && 'border-r-2')}>
                    {cell && <span className="inline-block bg-[#c0c0c0]">{cell}</span>}
                  </td>
                ))}
              </tr>
            ))}
          </tbody>
        </table>
      </div>
    </div>
  );
}

function ScrollBar() {
  return (
    <div className="flex w-[17px] shrink-0 flex-col items-center bg-[#efefef]">
      <button aria-label="Scroll up" className="flex h-[18px] items-center">
        <svg viewBox="0 0 7 4" className="h-1 w-[7px]"><path d="M3.500 0L7 4H0z" fill="#444" /></svg>
      </button>
      <div className="flex h-[285px] w-[15px] flex-col items-center justify-center gap-[2px] rounded-[2px] border border-[#979797] bg-gradient-to-r from-[#f5f5f5] via-[#dedede] to-[#c4c4c8]">
        <span className="h-px w-[7px] bg-[#555]" />
        <span className="h-px w-[7px] bg-[#555]" />
        <span className="h-px w-[7px] bg-[#555]" />
      </div>
      <div className="flex-1" />
      <button aria-label="Scroll down" className="flex h-[18px] items-center">
        <Caret className="text-[#444]" />
      </button>
      <button aria-label="Previous page" className="mb-[3px] h-[15px] w-[15px] rounded-[2px] border border-[#6f6f6f] bg-[#f0f0f0]">
        <svg viewBox="0 0 13 13" className="h-full w-full"><path d="M6.500 1l4 5h-8zM6.500 6l4 5h-8z" /></svg>
      </button>
    </div>
  );
}

function Group({ children, className }: { children: ReactNode; className?: string }) {
  return (
    <div className={clsx('flex h-[31px] shrink-0 items-start border border-[#e2e2e2] bg-[#f6f6f6] px-px pt-[2px]', className)}>
      {children}
    </div>
  );
}

function SectionHeader({ title, open, className }: { title: string; open?: boolean; className?: string }) {
  return (
    <div className={clsx('flex h-[27px] items-center bg-gradient-to-b from-[#dcdcdc] to-[#efefef] pr-[6px] pl-[6px]', className)}>
      <Expander open={open} />
      <h3 className="ml-[5px] flex-1 text-[12px] font-bold text-[#262b33]">{title}</h3>
      <button aria-label={`${title} dialog`}>
        <svg viewBox="0 0 11 10" className="h-[10px] w-[11px]">
          <rect x=".500" y=".500" width="10" height="9" fill="#fff" stroke="#3f69b0" />
          <rect x="1" y="1" width="9" height="2" fill="#8db4ea" />
          <path d="M3 6h1v1H3zM5 6h1v1H5zM7 6h1v1H7z" fill="#2b4f8c" />
        </svg>
      </button>
    </div>
  );
}

function Spin({ icon, label, value, className }: { icon: string; label: string; value: string; className: string }) {
  return (
    <div className="flex h-[23px] items-center">
      <Icon name={icon} />
      <div className={clsx('ml-[5px] flex h-[23px] border border-[#a6a8ad] bg-white p-px', className)}>
        <input aria-label={label} defaultValue={value} className="min-w-0 flex-1 pl-px text-[11px] outline-none" />
        <div className="flex w-[15px] flex-col border border-[#b5b8c2]">
          <button aria-label={`${label} up`} className="flex flex-1 items-center justify-center border-b border-[#b5b8c2] bg-[#f1f1f3]">
            <svg viewBox="0 0 5 3" className="h-[3px] w-[5px]"><path d="M2.500 0L5 3H0z" fill="#3f5e9e" /></svg>
          </button>
          <button aria-label={`${label} down`} className="flex flex-1 items-center justify-center bg-[#e6e6ea]">
            <svg viewBox="0 0 5 3" className="h-[3px] w-[5px]"><path d="M0 0h5L2.500 3z" fill="#3f5e9e" /></svg>
          </button>
        </div>
      </div>
    </div>
  );
}

function Properties() {
  return (
    <aside className="flex min-w-0 flex-1 flex-col bg-[#efefef] pt-1 pl-[2px]">
      <div className="flex h-[27px] items-center border border-[#dedede] pr-[4px] pl-[10px]">
        <h2 className="flex-1 text-[12px] font-bold">Properties</h2>
        <button aria-label="Close sidebar">
          <svg viewBox="0 0 9 9" className="h-[9px] w-[9px]"><path d="M1 1l7 7M8 1L1 8" stroke="#555f6c" strokeWidth="2" /></svg>
        </button>
      </div>

      <SectionHeader title="Text" open />
      <div className="flex flex-col px-[7px] pt-px">
        <div className="flex gap-[6px]">
          <Select value="Times New Roman" label="Font" className="w-[158px]" />
          <Select value="12" label="Size" className="w-[51px]" />
        </div>
        <div className="mt-2 flex justify-between">
          <Group><ToolItems items={['bold', 'italic', 'underline', 'v', 'strike', 'shadow']} /></Group>
          <Group><ToolItems items={['grow', 'shrink']} /></Group>
        </div>
        <div className="mt-[11px] flex">
          <Group><ToolItems items={['superscript', 'subscript']} /></Group>
          <Group className="ml-2"><ToolItems items={['spacing', 'v']} /></Group>
          <Group className="ml-[17px]"><ToolItems items={['fontcolor', 'v']} /></Group>
          <Group className="ml-[5px]"><ToolItems items={['highlight', 'v']} /></Group>
        </div>
      </div>

      <SectionHeader title="Paragraph" open className="mt-[3px]" />
      <div className="flex flex-col px-[7px]">
        <div className="flex">
          <Group><ToolItems items={['left', '!center', 'right', 'justify']} /></Group>
        </div>
        <div className="mt-1 flex">
          <Group><ToolItems items={['bullets', 'v', 'numbering', 'v']} /></Group>
          <Group className="ml-[19px]">
            <button aria-label="Background color" className="flex items-center pt-1 pl-[3px]">
              <Icon name="bucket" />
              <svg viewBox="0 0 16 16" className="h-4 w-4"><rect x=".500" y=".500" width="15" height="15" fill="#fff" stroke="#3a63a5" /><rect x="2.500" y="2.500" width="11" height="11" fill="#fff" stroke="#000" /></svg>
            </button>
            <div className="w-1" />
            <ArrowButton />
          </Group>
        </div>
        <div className="flex h-5 items-center text-[12px]">
          <span className="w-[115px]"><Mnemonic text="&Spacing:" /></span>
          <span><Mnemonic text="&Indent:" /></span>
        </div>
        <div className="flex">
          <Group className="mr-[61px]"><ToolItems items={['spaceinc', 'spacedec']} /></Group>
          <Group><ToolItems items={['indent', 'dedent', 'hanging']} /><div className="w-[5px]" /></Group>
        </div>
        <div className="mt-[11px] grid grid-cols-[115px_1fr] gap-y-2">
          <Spin icon="above" label="Above spacing" value="0,00cm" className="w-[88px]" />
          <Spin icon="before" label="Before indent" value="0,19cm" className="w-[82px]" />
          <Spin icon="below" label="Below spacing" value="0,00cm" className="w-[88px]" />
          <Spin icon="after" label="After indent" value="0,19cm" className="w-[82px]" />
          <div className="flex"><Group><ToolItems items={['linespacing', 'v']} /></Group></div>
          <Spin icon="firstline" label="First line indent" value="0,00cm" className="w-[82px]" />
        </div>
      </div>

      <SectionHeader title="Page" className="mt-[9px] border-b border-[#dedede]" />
    </aside>
  );
}

function TabBar() {
  return (
    <div className="flex w-[40px] shrink-0 flex-col items-center border-r border-[#a0a0a0] bg-[#efefef]">
      <button aria-label="Sidebar settings" className="mt-[14px] h-[11px] w-[11px]">
        <svg viewBox="0 0 11 11"><path d="M1 1.500h7M1 4.500h7M1 7.500h4" stroke="#3a4554" /><path d="M5 7h6L8 10z" fill="#1b2030" /></svg>
      </button>
      <div className="mt-[13px] h-px w-6 bg-[#dedede]" />
      <button aria-label="Properties deck" className="mt-[3px] flex h-[32px] w-[32px] items-center justify-center rounded-[3px] border border-[#9c9c9c] bg-[#eaeaea]">
        <svg viewBox="0 0 22 22" className="h-[22px] w-[22px]">
          <path d="M1 6l5-3v6l5 2v10L1 17z" fill="#2b9df0" />
          <path d="M2 5l9-4 9 4-9 4z" fill="#49b6f5" />
          <path d="M11 9l9-4v11l-9 5z" fill="#6fc91e" />
          <path d="M11 1l9 4-4 2-9-4z" fill="#8fe03a" />
          <path d="M6 14l5 2v5l-5-2z" fill="#6fc91e" />
          <path d="M6 8v11M1 12l10 4 9-5M15.500 7v11M11 9v12M2 5l9 4 9-4M6 3l9 4M6 7l9-4" stroke="#fff" fill="none" />
        </svg>
      </button>
      <button aria-label="Styles deck" className="mt-[5px]">
        <svg viewBox="0 0 24 24" className="h-6 w-6">
          <path d="M2 6q3-5 8-2l5 8 4 2-2 6-6 2-9-1 4-5 1-6z" fill="#1d4468" />
          <path d="M3 6q2-4 6-3l-1 5-3-1z" fill="#c46a1c" />
          <path d="M4 20l5-7 6 3-1 5z" fill="#3b8fd0" />
          <path d="M15 12q7 2 4 9l-5 1z" fill="#7dbb42" />
          <path d="M19 2l1 3 3 .5-2 2 .5 3-2.500-1.500L16.500 10.500l.5-3-2-2 3-.5z" fill="#fbc02d" />
          <circle cx="13" cy="2.500" r="2.300" fill="#c86bd8" />
          <circle cx="3" cy="11" r="2.300" fill="#ee5aa8" />
          <circle cx="21" cy="13" r="2.200" fill="#ee3f6a" />
        </svg>
      </button>
      <button aria-label="Gallery deck" className="mt-[11px]">
        <svg viewBox="0 0 24 24" className="h-6 w-6">
          <path d="M6 1l16 5-5 15L1 15z" fill="#fff" stroke="#9aa3ab" />
          <path d="M7 4l12 4-3 9L4 13z" fill="#8cc7f0" />
          <path d="M4 13l5-3 4 2 5-1-2 6z" fill="#5da83c" />
          <path d="M9 13l9-7 2 2-9 8z" fill="#2f78bd" />
          <path d="M2 15l16 7 5-13" fill="none" stroke="#b5bcc2" />
        </svg>
      </button>
      <button aria-label="Navigator deck" className="mt-[11px]">
        <svg viewBox="0 0 24 24" className="h-6 w-6">
          <circle cx="12" cy="12" r="10" fill="#f7f7f7" stroke="#f08c1a" strokeWidth="2.500" />
          <circle cx="12" cy="12.500" r="6.500" fill="none" stroke="#c8cdd2" />
          <path d="M18 6l-4 9-4-4z" fill="#d8302a" />
          <path d="M6 19l4-8 4 4z" fill="#4b93d8" />
          <text x="12" y="8" fontSize="7" fontWeight="700" fill="#333" textAnchor="middle" fontFamily="Open Sans, sans-serif">N</text>
        </svg>
      </button>
    </div>
  );
}

export default function App() {
  const [menuOpen, setMenuOpen] = useState(true);

  return (
    <div className="flex h-screen flex-col overflow-hidden bg-[#f0f0f0] font-['Open_Sans','Noto_Sans',sans-serif] text-[11px] text-black">
      {/* Window behind, only its top strip is visible */}
      <div className="h-[72px] shrink-0 overflow-hidden">
        <TitleBar />
        <MenuBar open={false} />
        <StandardToolbar />
      </div>

      {/* Front window */}
      <div className="flex min-h-0 flex-1 flex-col">
        <TitleBar active />
        <MenuBar open={menuOpen} onToggle={() => setMenuOpen(o => !o)} />
        <StandardToolbar />
        <FormatToolbar />

        <div className="flex min-h-0 flex-1 border-t border-[#a0a0a0]">
          <main className="flex min-w-0 flex-1 flex-col border-r border-l-2 border-[#a0a0a0]">
            <div className="flex h-8 shrink-0 border-b border-[#a0a0a0] bg-gradient-to-b from-[#d3d9ed] to-[#e1e6f6]">
              <div className="flex items-start border-r border-[#bcc1d0] pt-1">
                <Handle />
                <ToolItems items={dataItems} />
                <div className="w-[6px]" />
                <Overflow />
              </div>
            </div>

            <div className="flex h-[145px] shrink-0 border-b border-[#a0a0a0] pt-[3px]">
              <SourceTree />
              <DataGrid />
            </div>

            <div className="flex h-2 shrink-0 items-center justify-center border-b border-[#6b6b6b]">
              <svg viewBox="0 0 34 3" className="h-[3px] w-[34px]"><path d="M0 3l2-2 2 2zM30 3l2-2 2 2zM8 1h2v1H8zM12 1h2v1h-2zM16 1h2v1h-2zM20 1h2v1h-2zM24 1h2v1h-2z" fill="#555" /></svg>
            </div>

            <div className="flex min-h-0 flex-1">
              <div className="flex min-w-0 flex-1 flex-col">
                <HorizontalRuler />
                <div className="flex min-h-0 flex-1">
                  <VerticalRuler />
                  <DocumentPage />
                </div>
              </div>
              <ScrollBar />
            </div>
          </main>

          <div className="flex w-[7px] shrink-0 items-center justify-center">
            <svg viewBox="0 0 3 34" className="mb-[-48px] h-[34px] w-[3px]"><path d="M0 0l3 2-3 2zM0 30l3 2-3 2zM1 8h1v2H1zM1 12h1v2H1zM1 16h1v2H1zM1 20h1v2H1zM1 24h1v2H1z" fill="#555" /></svg>
          </div>

          <div className="flex w-[275px] shrink-0 border-l border-[#a0a0a0]">
            <Properties />
            <TabBar />
          </div>
        </div>
      </div>
    </div>
  );
}
